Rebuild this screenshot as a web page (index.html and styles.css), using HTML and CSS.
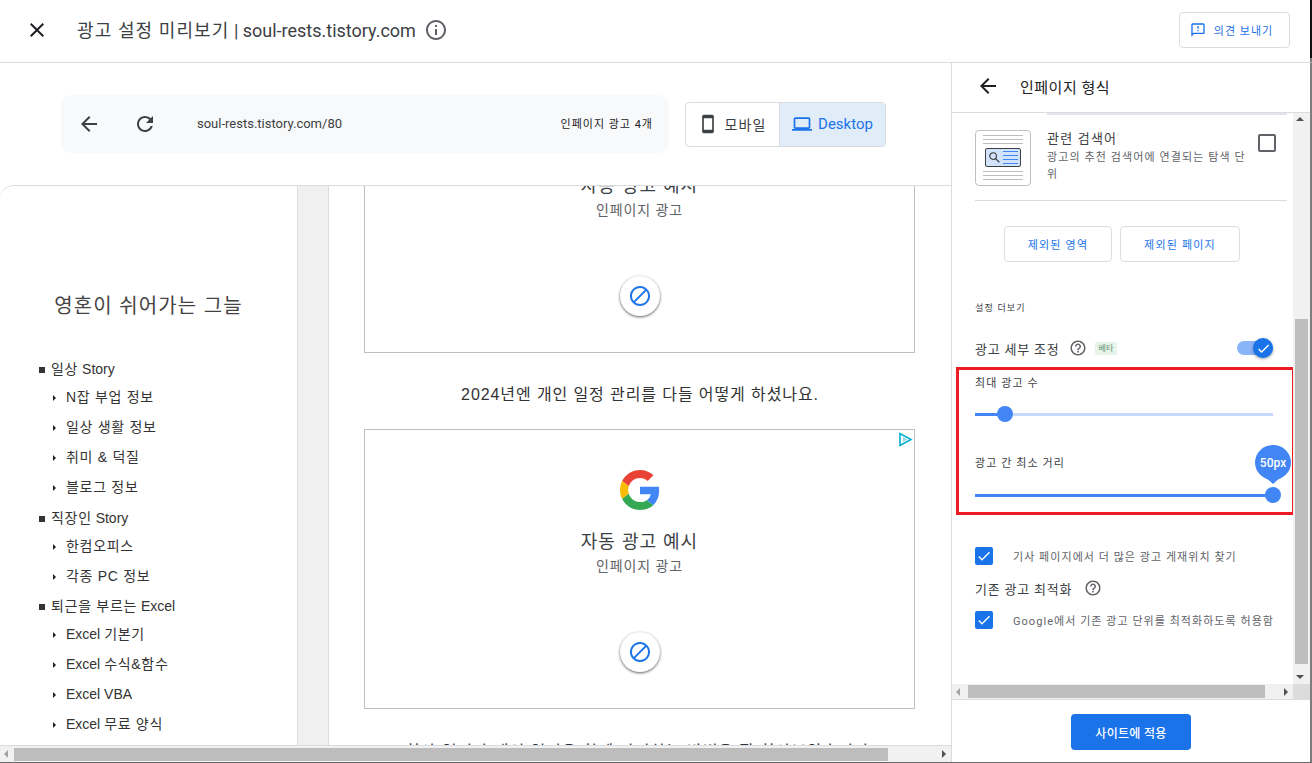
FILE: index.html
```html
<!DOCTYPE html>
<html lang="ko">
<head>
    <meta charset="UTF-8">
    <meta name="viewport" content="width=device-width, initial-scale=1.0">
    <title>광고 설정 미리보기</title>
    <link rel="stylesheet" href="styles.css">
</head>
<body>
    <div class="app">
        <header class="topbar">
            <svg class="close-icon" viewBox="0 0 24 24"><path d="M19 6.41L17.59 5 12 10.59 6.41 5 5 6.41 10.59 12 5 17.59 6.41 19 12 13.41 17.59 19 19 17.59 13.41 12z"/></svg>
            <h1 class="topbar-title"><span class="ko">광고 설정 미리보기</span> | soul-rests.tistory.com</h1>
            <svg class="info-icon" viewBox="0 0 24 24"><path d="M11 7h2v2h-2zm0 4h2v6h-2zm1-9C6.48 2 2 6.48 2 12s4.48 10 10 10 10-4.48 10-10S17.52 2 12 2zm0 18c-4.41 0-8-3.59-8-8s3.59-8 8-8 8 3.59 8 8-3.59 8-8 8z"/></svg>
            <button class="feedback-btn">
                <svg viewBox="0 0 24 24"><path d="M20 2H4c-1.1 0-1.99.9-1.99 2L2 22l4-4h14c1.1 0 2-.9 2-2V4c0-1.1-.9-2-2-2zm0 14H5.17L4 17.17V4h16v12zm-9-4h2v2h-2zm0-6h2v4h-2z"/></svg>
                의견 보내기
            </button>
        </header>

        <div class="main">
            <section class="preview">
                <div class="toolbar">
                    <div class="address-bar">
                        <svg class="nav-icon" viewBox="0 0 24 24"><path d="M20 11H7.83l5.59-5.59L12 4l-8 8 8 8 1.41-1.41L7.83 13H20v-2z"/></svg>
                        <svg class="nav-icon" viewBox="0 0 24 24"><path d="M17.65 6.35C16.2 4.9 14.21 4 12 4c-4.42 0-7.99 3.58-7.99 8s3.57 8 7.99 8c3.73 0 6.84-2.55 7.73-6h-2.08c-.82 2.33-3.04 4-5.65 4-3.31 0-6-2.69-6-6s2.69-6 6-6c1.66 0 3.14.69 4.22 1.78L13 11h7V4l-2.35 2.35z"/></svg>
                        <span class="address-url">soul-rests.tistory.com/80</span>
                        <span class="ad-count">인페이지 광고 4개</span>
                    </div>
                    <div class="device-toggle">
                        <div class="device-option">
                            <svg viewBox="0 0 24 24"><path d="M17 1.01L7 1c-1.1 0-2 .9-2 2v18c0 1.1.9 2 2 2h10c1.1 0 2-.9 2-2V3c0-1.1-.9-1.99-2-1.99zM17 19H7V5h10v14z"/></svg>
                            <span class="ko">모바일</span>
                        </div>
                        <div class="device-option selected">
                            <svg viewBox="0 0 24 24"><path d="M20 18c1.1 0 1.99-.9 1.99-2L22 6c0-1.1-.9-2-2-2H4c-1.1 0-2 .9-2 2v10c0 1.1.9 2 2 2H0v2h24v-2h-4zM4 6h16v10H4V6z"/></svg>
                            Desktop
                        </div>
                    </div>
                </div>

                <div class="frame">
                    <div class="frame-view">
                        <aside class="blog-side">
                            <div class="blog-title">영혼이 쉬어가는 그늘</div>
                            <ul class="blog-menu">
                                <li class="cat"><span class="ko">일상</span> Story</li>
                                <li class="sub"><span class="ko">N잡 부업 정보</span></li>
                                <li class="sub"><span class="ko">일상 생활 정보</span></li>
                                <li class="sub"><span class="ko">취미 &amp; 덕질</span></li>
                                <li class="sub"><span class="ko">블로그 정보</span></li>
                                <li class="cat"><span class="ko">직장인</span> Story</li>
                                <li class="sub"><span class="ko">한컴오피스</span></li>
                                <li class="sub"><span class="ko">각종 PC 정보</span></li>
                                <li class="cat"><span class="ko">퇴근을 부르는</span> Excel</li>
                                <li class="sub">Excel <span class="ko">기본기</span></li>
                                <li class="sub">Excel <span class="ko">수식&amp;함수</span></li>
                                <li class="sub">Excel VBA</li>
                                <li class="sub">Excel <span class="ko">무료 양식</span></li>
                            </ul>
                        </aside>
                        <div class="blog-gutter"></div>
                        <article class="blog-post">
                            <div class="ad-box first">
                                <svg class="g-logo" viewBox="0 0 48 48">
                                    <path fill="#EA4335" d="M24 9.5c3.54 0 6.71 1.22 9.21 3.6l6.85-6.85C35.9 2.38 30.47 0 24 0 14.62 0 6.51 5.38 2.56 13.22l7.98 6.19C12.43 13.72 17.74 9.5 24 9.5z"/>
                                    <path fill="#4285F4" d="M46.98 24.55c0-1.57-.15-3.09-.38-4.55H24v9.02h12.94c-.58 2.96-2.26 5.48-4.78 7.18l7.73 6c4.51-4.18 7.09-10.36 7.09-17.65z"/>
                                    <path fill="#FBBC05" d="M10.53 28.59c-.48-1.45-.76-2.99-.76-4.59s.27-3.14.76-4.59l-7.98-6.19C.92 16.46 0 20.12 0 24c0 3.88.92 7.54 2.56 10.78l7.97-6.19z"/>
                                    <path fill="#34A853" d="M24 48c6.48 0 11.93-2.13 15.89-5.81l-7.73-6c-2.15 1.45-4.92 2.3-8.16 2.3-6.26 0-11.57-4.22-13.47-9.91l-7.98 6.19C6.51 42.62 14.62 48 24 48z"/>
                                </svg>
                                <div class="ad-title">자동 광고 예시</div>
                                <div class="ad-sub">인페이지 광고</div>
                                <div class="ad-block">
                                    <svg viewBox="0 0 24 24"><path d="M12 2C6.48 2 2 6.48 2 12s4.48 10 10 10 10-4.48 10-10S17.52 2 12 2zM4 12c0-4.42 3.58-8 8-8 1.85 0 3.55.63 4.9 1.69L5.69 16.9C4.63 15.55 4 13.85 4 12zm8 8c-1.85 0-3.55-.63-4.9-1.69L18.31 7.1C19.37 8.45 20 10.15 20 12c0 4.42-3.58 8-8 8z"/></svg>
                                </div>
                            </div>
                            <p class="post-text">2024년엔 개인 일정 관리를 다들 어떻게 하셨나요.</p>
                            <div class="ad-box">
                                <svg class="ad-choices" viewBox="0 0 15 15"><path d="M2 1.5v12l11-6z" fill="none" stroke="#00aecd" stroke-width="1.6"/><path d="M5 5v5l4.5-2.5z" fill="#9bdcea"/></svg>
                                <svg class="g-logo" viewBox="0 0 48 48">
                                    <path fill="#EA4335" d="M24 9.5c3.54 0 6.71 1.22 9.21 3.6l6.85-6.85C35.9 2.38 30.47 0 24 0 14.62 0 6.51 5.38 2.56 13.22l7.98 6.19C12.43 13.72 17.74 9.5 24 9.5z"/>
                                    <path fill="#4285F4" d="M46.98 24.55c0-1.57-.15-3.09-.38-4.55H24v9.02h12.94c-.58 2.96-2.26 5.48-4.78 7.18l7.73 6c4.51-4.18 7.09-10.36 7.09-17.65z"/>
                                    <path fill="#FBBC05" d="M10.53 28.59c-.48-1.45-.76-2.99-.76-4.59s.27-3.14.76-4.59l-7.98-6.19C.92 16.46 0 20.12 0 24c0 3.88.92 7.54 2.56 10.78l7.97-6.19z"/>
                                    <path fill="#34A853" d="M24 48c6.48 0 11.93-2.13 15.89-5.81l-7.73-6c-2.15 1.45-4.92 2.3-8.16 2.3-6.26 0-11.57-4.22-13.47-9.91l-7.98 6.19C6.51 42.62 14.62 48 24 48z"/>
                                </svg>
                                <div class="ad-title">자동 광고 예시</div>
                                <div class="ad-sub">인페이지 광고</div>
                                <div class="ad-block">
                                    <svg viewBox="0 0 24 24"><path d="M12 2C6.48 2 2 6.48 2 12s4.48 10 10 10 10-4.48 10-10S17.52 2 12 2zM4 12c0-4.42 3.58-8 8-8 1.85 0 3.55.63 4.9 1.69L5.69 16.9C4.63 15.55 4 13.85 4 12zm8 8c-1.85 0-3.55-.63-4.9-1.69L18.31 7.1C19.37 8.45 20 10.15 20 12c0 4.42-3.58 8-8 8z"/></svg>
                                </div>
                            </div>
                            <p class="post-text cut">회사 일정과 개인 일정을 함께 관리하는 방법을 잘 찾아보았습니다.</p>
                        </article>
                    </div>
                    <div class="hscroll">
                        <span class="arrow left"></span>
                        <div class="hscroll-track"><div class="hscroll-thumb frame-thumb"></div></div>
                        <span class="arrow right"></span>
                    </div>
                </div>
            </section>

            <section class="panel">
                <div class="panel-head">
                    <svg viewBox="0 0 24 24"><path d="M20 11H7.83l5.59-5.59L12 4l-8 8 8 8 1.41-1.41L7.83 13H20v-2z"/></svg>
                    <span>인페이지 형식</span>
                </div>
                <div class="panel-scroll">
                    <div class="panel-row">
                        <div class="panel-body">
                            <div class="format-item">
                                <div class="format-thumb">
                                    <i class="thumb-line"></i><i class="thumb-line"></i><i class="thumb-line"></i>
                                    <div class="thumb-box">
                                        <svg viewBox="0 0 14 14"><circle cx="5.5" cy="5.5" r="3.6" fill="none" stroke="#3c4043" stroke-width="1.2"/><path d="M8.2 8.2l4 4" stroke="#3c4043" stroke-width="1.4"/></svg>
                                        <div class="thumb-rows"><i></i><i></i><i></i><i></i></div>
                                    </div>
                                    <i class="thumb-line"></i><i class="thumb-line"></i><i class="thumb-line"></i>
                                </div>
                                <div class="format-text">
                                    <div class="format-name">관련 검색어</div>
                                    <div class="format-desc">광고의 추천 검색어에 연결되는 탐색 단위</div>
                                </div>
                                <span class="checkbox-empty"></span>
                            </div>
                            <div class="exclude-btns">
                                <button class="outline-btn">제외된 영역</button>
                                <button class="outline-btn wide">제외된 페이지</button>
                            </div>
                            <div class="more-label">설정 더보기</div>
                            <div class="tune-row">
                                <span class="setting-name">광고 세부 조정</span>
                                <svg class="help-icon" viewBox="0 0 24 24"><path d="M11 18h2v-2h-2v2zm1-16C6.48 2 2 6.48 2 12s4.48 10 10 10 10-4.48 10-10S17.52 2 12 2zm0 18c-4.41 0-8-3.59-8-8s3.59-8 8-8 8 3.59 8 8-3.59 8-8 8zm0-14c-2.21 0-4 1.79-4 4h2c0-1.1.9-2 2-2s2 .9 2 2c0 2-3 1.75-3 5h2c0-2.25 3-2.5 3-5 0-2.21-1.79-4-4-4z"/></svg>
                                <span class="beta">베타</span>
                                <div class="switch">
                                    <div class="switch-knob">
                                        <svg viewBox="0 0 24 24"><path d="M9 16.17L4.83 12l-1.42 1.41L9 19 21 7l-1.41-1.41z"/></svg>
                                    </div>
                                </div>
                            </div>
                            <div class="highlight">
                                <div class="slider-label">최대 광고 수</div>
                                <div class="slider">
                                    <div class="slider-fill low"></div>
                                    <div class="slider-thumb"></div>
                                </div>
                                <div class="slider-label second">광고 간 최소 거리</div>
                                <div class="slider">
                                    <div class="slider-fill full"></div>
                                    <div class="slider-thumb"></div>
                                    <div class="slider-bubble">50px</div>
                                </div>
                            </div>
                            <div class="check-row first">
                                <span class="checkbox-on"><svg viewBox="0 0 24 24"><path d="M9 16.17L4.83 12l-1.42 1.41L9 19 21 7l-1.41-1.41z"/></svg></span>
                                <span class="check-text">기사 페이지에서 더 많은 광고 게재위치 찾기</span>
                            </div>
                            <div class="optimize-row">
                                <span class="setting-name">기존 광고 최적화</span>
                                <svg class="help-icon" viewBox="0 0 24 24"><path d="M11 18h2v-2h-2v2zm1-16C6.48 2 2 6.48 2 12s4.48 10 10 10 10-4.48 10-10S17.52 2 12 2zm0 18c-4.41 0-8-3.59-8-8s3.59-8 8-8 8 3.59 8 8-3.59 8-8 8zm0-14c-2.21 0-4 1.79-4 4h2c0-1.1.9-2 2-2s2 .9 2 2c0 2-3 1.75-3 5h2c0-2.25 3-2.5 3-5 0-2.21-1.79-4-4-4z"/></svg>
                            </div>
                            <div class="check-row">
                                <span class="checkbox-on"><svg viewBox="0 0 24 24"><path d="M9 16.17L4.83 12l-1.42 1.41L9 19 21 7l-1.41-1.41z"/></svg></span>
                                <span class="check-text">Google에서 기존 광고 단위를 최적화하도록 허용함</span>
                            </div>
                        </div>
                        <div class="vscroll">
                            <span class="arrow up"></span>
                            <div class="vscroll-track"><div class="vscroll-thumb"></div></div>
                            <span class="arrow down"></span>
                        </div>
                    </div>
                    <div class="hscroll panel-hscroll">
                        <span class="arrow left"></span>
                        <div class="hscroll-track"><div class="hscroll-thumb panel-thumb"></div></div>
                        <span class="arrow right"></span>
                        <span class="scroll-corner"></span>
                    </div>
                </div>
                <div class="panel-foot">
                    <button class="apply-btn">사이트에 적용</button>
                </div>
            </section>
        </div>
    </div>
</body>
</html>
```

FILE: styles.css
```css
* {
    box-sizing: border-box;
}
body {
    margin: 0;
    background: #fff;
    color: #202124;
    font-family: Roboto, "Noto Sans CJK KR", sans-serif;
}
.app {
    width: 1312px;
    height: 763px;
    display: flex;
    flex-direction: column;
    overflow: hidden;
    border-bottom: 1px solid #696969;
}

/* top bar */
.topbar {
    height: 63px;
    flex: none;
    position: relative;
    display: flex;
    align-items: center;
    border-bottom: 1px solid #dadce0;
    border-right: 2px solid #7d7d7d;
    padding: 0 0 2px 25px;
}
.topbar::after {
    content: "";
    position: absolute;
    top: 0;
    right: -2px;
    width: 2px;
    height: 58px;
    background: #111;
}
.close-icon {
    width: 24px;
    height: 24px;
    fill: #202124;
}
.topbar-title {
    margin: 0 0 2px 28px;
    font-size: 18px;
    font-weight: 400;
    color: #3c4043;
    white-space: nowrap;
}
.topbar-title .ko {
    letter-spacing: 1.1px;
}
.info-icon {
    width: 24px;
    height: 24px;
    margin-left: 8px;
    fill: #5f6368;
}
.feedback-btn {
    margin-left: auto;
    margin-right: 20px;
    width: 111px;
    height: 36px;
    padding: 0 6px 0 0;
    display: flex;
    align-items: center;
    justify-content: center;
    gap: 8px;
    background: #fff;
    border: 1px solid #dadce0;
    border-radius: 4px;
    color: #1a73e8;
    font: 11px Roboto, "Noto Sans CJK KR", sans-serif;
    letter-spacing: 1px;
}
.feedback-btn svg {
    width: 16px;
    height: 16px;
    fill: #1a73e8;
}

.main {
    flex: 1;
    display: flex;
    min-height: 0;
}

/* preview side */
.preview {
    width: 952px;
    flex: none;
    display: flex;
    flex-direction: column;
    border-right: 1px solid #dadce0;
}
.toolbar {
    height: 122px;
    flex: none;
    display: flex;
    align-items: center;
    padding: 0 0 0 61px;
}
.address-bar {
    width: 608px;
    height: 58px;
    display: flex;
    align-items: center;
    background: #f8f9fa;
    border-radius: 10px;
    padding: 0 16px 2px 16px;
    font-size: 12px;
}
.nav-icon {
    width: 24px;
    height: 24px;
    fill: #3c4043;
    margin-right: 32px;
    position: relative;
    top: 1px;
}
.address-url {
    margin-left: 8px;
    color: #3c4043;
    font-size: 13px;
}
.ad-count {
    margin-left: auto;
    font-size: 11px;
    letter-spacing: 1px;
    color: #202124;
}
.device-toggle {
    margin-left: 16px;
    width: 201px;
    height: 45px;
    display: flex;
    border: 1px solid #dadce0;
    border-radius: 4px;
    overflow: hidden;
}
.device-option {
    flex: 1;
    display: flex;
    align-items: center;
    justify-content: center;
    gap: 6px;
    font-size: 14px;
    color: #3c4043;
}
.device-option .ko {
    letter-spacing: 1.2px;
}
.device-option svg {
    width: 20px;
    height: 20px;
    fill: #3c4043;
}
.device-option.selected {
    flex: none;
    width: 106px;
    background: #e1ecf9;
    border-left: 1px solid #dadce0;
    color: #1a73e8;
    font-size: 15px;
}
.device-option.selected svg {
    fill: #1a73e8;
}

/* the blog inside the preview */
.frame {
    flex: 1;
    min-height: 0;
    display: flex;
    flex-direction: column;
    border-top: 1px solid #dadce0;
    border-top-left-radius: 14px;
    overflow: hidden;
    font-family: "Liberation Sans", "Noto Sans CJK KR", sans-serif;
}
.frame-view {
    flex: 1;
    min-height: 0;
    display: flex;
    overflow: hidden;
}
.blog-side {
    width: 298px;
    flex: none;
    border-right: 1px solid #dadce0;
    color: #333;
}
.blog-title {
    margin-top: 107px;
    text-align: center;
    font-size: 20px;
    line-height: 26px;
    color: #444;
    letter-spacing: 1.05px;
}
.blog-menu {
    list-style: none;
    margin: 38px 0 0;
    padding: 0;
    font-size: 14px;
}
.blog-menu .ko {
    letter-spacing: 0.7px;
}
.cat {
    height: 25px;
    line-height: 25px;
    margin-top: 3.5px;
    padding-left: 51px;
    position: relative;
}
.cat::before {
    content: "";
    position: absolute;
    left: 39px;
    top: 10px;
    width: 6px;
    height: 6px;
    background: #333;
}
.sub {
    height: 30px;
    line-height: 30px;
    padding-left: 66px;
    position: relative;
}
.sub::before {
    content: "";
    position: absolute;
    left: 53px;
    top: 13px;
    border-left: 3px solid #222;
    border-top: 3px solid transparent;
    border-bottom: 3px solid transparent;
}
.blog-gutter {
    width: 31px;
    flex: none;
    background: #f0f0f0;
    border-right: 1px solid #dadce0;
}
.blog-post {
    flex: 1;
    min-width: 0;
    padding: 0 35px;
    display: flex;
    flex-direction: column;
    color: #333;
}
.ad-box {
    width: 551px;
    height: 280px;
    flex: none;
    position: relative;
    display: flex;
    flex-direction: column;
    align-items: center;
    border: 1px solid #bdc1c6;
    padding-top: 40px;
}
.ad-box.first {
    margin-top: -113px;
}
.g-logo {
    width: 40px;
    height: 40px;
}
.ad-title {
    margin-top: 19px;
    font-size: 18px;
    line-height: 26px;
    letter-spacing: 1px;
    color: #3c4043;
}
.ad-sub {
    font-size: 14px;
    line-height: 22px;
    letter-spacing: 0.8px;
    color: #5f6368;
}
.ad-block {
    margin-top: 55px;
    width: 40px;
    height: 40px;
    border-radius: 50%;
    background: #fff;
    display: flex;
    align-items: center;
    justify-content: center;
    box-shadow: 0 1px 3px rgba(0, 0, 0, 0.45), 0 1px 2px rgba(60, 64, 67, 0.3);
}
.ad-block svg {
    width: 24px;
    height: 24px;
    fill: #1a73e8;
}
.ad-choices {
    position: absolute;
    top: 2px;
    right: 1px;
    width: 15px;
    height: 15px;
}
.post-text {
    flex: none;
    margin: 0;
    height: 76px;
    line-height: 83px;
    text-align: center;
    font-size: 16px;
    letter-spacing: 0.9px;
    white-space: nowrap;
}
.post-text.cut {
    height: 60px;
    line-height: 85px;
}

/* fake scrollbars, the chrome of the screenshot */
.hscroll {
    height: 17px;
    flex: none;
    display: flex;
    align-items: center;
    background: #f1f1f1;
    border-top: 1px solid #dadce0;
}
.hscroll-track {
    flex: 1;
    height: 13px;
}
.hscroll-thumb {
    height: 100%;
    background: #bdbdbd;
}
.frame-thumb {
    width: 874px;
}
.panel-thumb {
    width: 297px;
}
.arrow {
    flex: none;
    width: 14px;
    height: 14px;
    position: relative;
}
.arrow::after {
    content: "";
    position: absolute;
    width: 0;
    height: 0;
}
.arrow.left::after {
    left: 4px;
    top: 3px;
    border-right: 4px solid #a3a3a3;
    border-top: 4px solid transparent;
    border-bottom: 4px solid transparent;
}
.arrow.right::after {
    left: 5px;
    top: 3px;
    border-left: 4px solid #505050;
    border-top: 4px solid transparent;
    border-bottom: 4px solid transparent;
}
.arrow.up::after {
    left: 1px;
    top: 4px;
    border-bottom: 4px solid #505050;
    border-left: 4px solid transparent;
    border-right: 4px solid transparent;
}
.arrow.down::after {
    left: 1px;
    top: 5px;
    border-top: 4px solid #505050;
    border-left: 4px solid transparent;
    border-right: 4px solid transparent;
}

/* settings panel */
.panel {
    flex: 1;
    min-width: 0;
    display: flex;
    flex-direction: column;
    border-right: 2px solid #7d7d7d;
}
.panel-head {
    height: 50px;
    flex: none;
    display: flex;
    align-items: center;
    gap: 20px;
    padding: 0 0 3px 24px;
    font-size: 15px;
    letter-spacing: 0.5px;
    color: #202124;
    border-bottom: 1px solid #dadce0;
}
.panel-head svg {
    width: 24px;
    height: 24px;
    fill: #202124;
}
.panel-scroll {
    flex: 1;
    min-height: 0;
    display: flex;
    flex-direction: column;
}
.panel-row {
    flex: 1;
    min-height: 0;
    display: flex;
}
.panel-body {
    flex: 1;
    min-width: 0;
    overflow: hidden;
    padding: 17px 0 0 23px;
}
.vscroll {
    width: 17px;
    flex: none;
    display: flex;
    flex-direction: column;
    align-items: center;
    background: #f1f1f1;
}
.vscroll-track {
    flex: 1;
    width: 13px;
    padding-top: 192px;
}
.vscroll-thumb {
    height: 345px;
    background: #bdbdbd;
}
.panel-hscroll {
    height: 16px;
    border-top: 0;
    border-bottom: 1px solid #dadce0;
}
.panel-hscroll .arrow.left {
    width: 16px;
}
.scroll-corner {
    width: 17px;
    height: 100%;
    background: #dcdcdc;
}
.format-item {
    display: flex;
    width: 312px;
    height: 71px;
    border-bottom: 1px solid #dadce0;
    position: relative;
}
.format-item::before {
    content: "";
    position: absolute;
    left: 72px;
    right: 0;
    top: -17px;
    height: 2px;
    background: #e3e3ea;
}
.format-thumb {
    width: 56px;
    height: 56px;
    flex: none;
    display: flex;
    flex-direction: column;
    gap: 3px;
    align-items: center;
    border: 1px solid #bdc1c6;
    border-radius: 4px;
    padding-top: 4px;
    margin-right: 16px;
}
.thumb-line {
    display: block;
    width: 40px;
    height: 1px;
    background: #bdbdbd;
}
.thumb-box {
    width: 36px;
    height: 19px;
    flex: none;
    display: flex;
    align-items: center;
    gap: 2px;
    padding-left: 2px;
    margin: 1px 0;
    background: #d2e3fc;
    border: 1px solid #3c4043;
    border-radius: 2px;
}
.thumb-box svg {
    width: 13px;
    height: 13px;
}
.thumb-rows {
    flex: 1;
    display: flex;
    flex-direction: column;
    gap: 3px;
    padding-right: 2px;
}
.thumb-rows i {
    display: block;
    height: 1px;
    background: #4285f4;
}
.format-text {
    width: 200px;
    flex: none;
}
.format-name {
    margin-top: -1px;
    font-size: 13px;
    line-height: 20px;
    letter-spacing: 1.2px;
    color: #3c4043;
}
.format-desc {
    font-size: 11px;
    line-height: 17px;
    letter-spacing: 1.1px;
    color: #5f6368;
}
.checkbox-empty {
    width: 18px;
    height: 18px;
    margin: 4px 0 0 11px;
    flex: none;
    border: 2px solid #5f6368;
    border-radius: 2px;
}
.exclude-btns {
    display: flex;
    gap: 8px;
    margin: 25px 0 0 29px;
}
.outline-btn {
    width: 108px;
    height: 36px;
    background: #fff;
    border: 1px solid #dadce0;
    border-radius: 4px;
    color: #1a73e8;
    font: 11px Roboto, "Noto Sans CJK KR", sans-serif;
    letter-spacing: 1.2px;
}
.outline-btn.wide {
    width: 120px;
}
.more-label {
    margin-top: 39px;
    font-size: 9px;
    line-height: 14px;
    letter-spacing: 1.2px;
    color: #3c4043;
}
.tune-row {
    display: flex;
    align-items: center;
    width: 298px;
    height: 24px;
    margin-top: 21px;
}
.setting-name {
    font-size: 13px;
    letter-spacing: 0.8px;
    color: #3c4043;
}
.help-icon {
    width: 18px;
    height: 18px;
    margin-left: 9px;
    fill: #5f6368;
}
.beta {
    margin-left: 8px;
    padding: 0 4px;
    height: 13px;
    line-height: 13px;
    font-size: 8px;
    color: #5f8f72;
    background: #e6f4ea;
    border-radius: 2px;
}
.switch {
    margin-left: auto;
    width: 36px;
    height: 14px;
    border-radius: 7px;
    background: #8ab4f8;
    position: relative;
}
.switch-knob {
    position: absolute;
    right: 0;
    top: -3px;
    width: 20px;
    height: 20px;
    border-radius: 50%;
    background: #1a73e8;
    display: flex;
    align-items: center;
    justify-content: center;
    box-shadow: 0 1px 3px rgba(60, 64, 67, 0.5);
}
.switch-knob svg {
    width: 15px;
    height: 15px;
    fill: #fff;
}
.highlight {
    width: 339px;
    height: 148px;
    margin: 7px 0 0 -19px;
    border: 3px solid #ed1c24;
    padding: 5px 0 0 16px;
}
.slider-label {
    font-size: 11px;
    line-height: 17px;
    letter-spacing: 1.1px;
    color: #3c4043;
}
.slider-label.second {
    margin-top: 39px;
}
.slider {
    position: relative;
    width: 298px;
    height: 3px;
    margin-top: 21px;
    background: #c6dafc;
}
.slider-label.second + .slider {
    margin-top: 22px;
}
.slider-fill {
    height: 100%;
    background: #4285f4;
}
.slider-fill.low {
    width: 30px;
}
.slider-fill.full {
    width: 100%;
}
.slider-thumb {
    position: absolute;
    top: -7px;
    left: 22px;
    width: 16px;
    height: 16px;
    border-radius: 50%;
    background: #4285f4;
}
.slider-fill.full ~ .slider-thumb {
    left: 290px;
}
.slider-bubble {
    position: absolute;
    left: 280px;
    top: -49px;
    width: 36px;
    height: 35px;
    display: flex;
    align-items: center;
    justify-content: center;
    border-radius: 50%;
    background: #4285f4;
    color: #fff;
    font-size: 12px;
    font-weight: 500;
}
.slider-bubble::after {
    content: "";
    position: absolute;
    left: 9px;
    top: 31px;
    border-top: 8px solid #4285f4;
    border-left: 9px solid transparent;
    border-right: 9px solid transparent;
}
.check-row {
    display: flex;
    align-items: center;
    height: 18px;
}
.check-row.first {
    margin-top: 32px;
}
.checkbox-on {
    width: 18px;
    height: 18px;
    flex: none;
    border-radius: 2px;
    background: #1a73e8;
    display: flex;
    align-items: center;
    justify-content: center;
}
.checkbox-on svg {
    width: 16px;
    height: 16px;
    fill: #fff;
}
.check-text {
    margin-left: 20px;
    font-size: 11px;
    letter-spacing: 1.05px;
    color: #5f6368;
    white-space: nowrap;
}
.optimize-row {
    display: flex;
    align-items: center;
    height: 24px;
    margin: 11px 0 11px;
}
.optimize-row .help-icon {
    margin-left: 12px;
}
.panel-foot {
    height: 62px;
    flex: none;
    display: flex;
    align-items: flex-start;
    justify-content: center;
    padding: 14px 0 0 0;
}
.apply-btn {
    width: 120px;
    height: 36px;
    border: 0;
    border-radius: 4px;
    background: #1a73e8;
    color: #fff;
    font: 500 12px Roboto, "Noto Sans CJK KR", sans-serif;
    letter-spacing: 0.3px;
}
```
